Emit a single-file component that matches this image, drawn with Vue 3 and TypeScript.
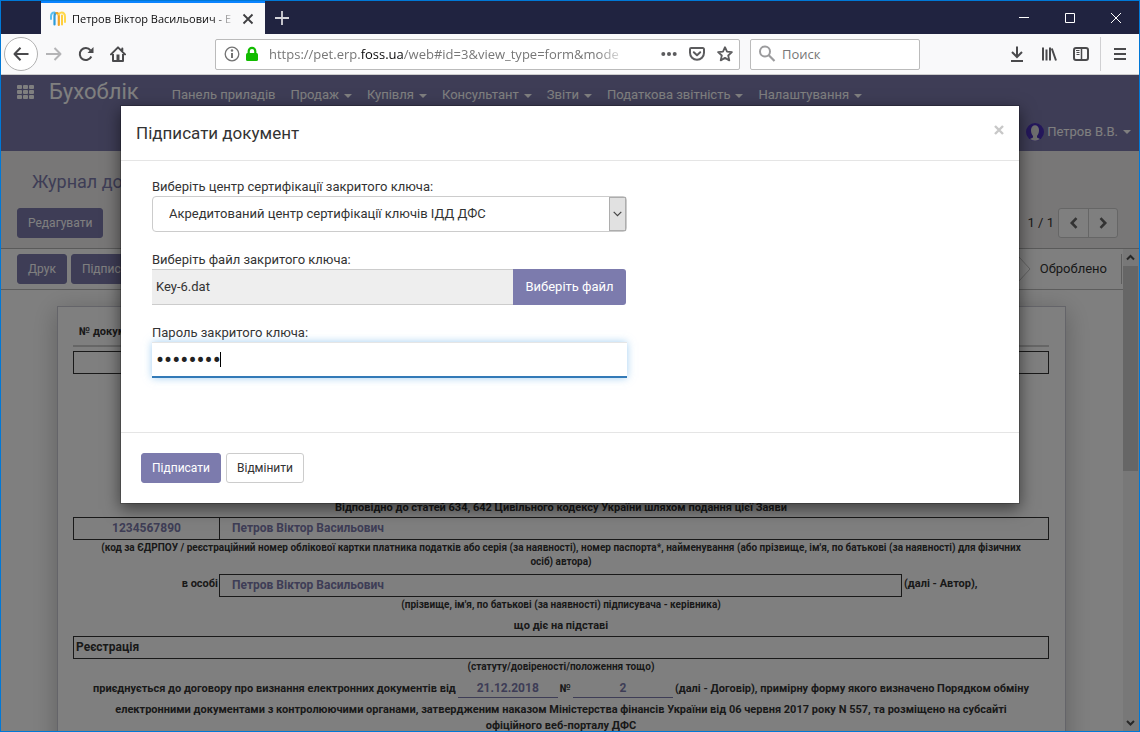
<script setup lang="ts">
import { ref } from 'vue'

interface MenuItem {
  label: string
  dropdown: boolean
}

const menu: MenuItem[] = [
  { label: 'Панель приладів', dropdown: false },
  { label: 'Продаж', dropdown: true },
  { label: 'Купівля', dropdown: true },
  { label: 'Консультант', dropdown: true },
  { label: 'Звіти', dropdown: true },
  { label: 'Податкова звітність', dropdown: true },
  { label: 'Налаштування', dropdown: true },
]

const authorities: string[] = ['Акредитований центр сертифікації ключів ІДД ДФС']
const authority = ref<string>(authorities[0])
const fileName = ref<string>('Key-6.dat')
const password = ref<string>('password')
const search = ref<string>('')
</script>

<template>
  <div class="window">
    <div class="tabs">
      <div class="tab">
        <svg class="favicon" width="16" height="16" viewBox="0 0 16 16" fill="none" stroke-linecap="round">
          <path d="M1 8V5.500C1 3 2.500 1.500 4.500 1.500" stroke="#5bc0f0" stroke-width="2" />
          <path d="M4.500 13.500V5C4.500 3 5.500 2 7 2" stroke="#2f9bd8" stroke-width="2.200" />
          <path d="M6.500 2C8.500 2 8.800 3.500 8.800 5v9" stroke="#f5a623" stroke-width="2.200" />
          <path d="M9 3.500c.5-1.300 1.300-2 2.500-2C14 1.500 15 3.500 15 6v5" stroke="#ffd84a" stroke-width="2" />
          <path d="M12 4.500v9" stroke="#ffc928" stroke-width="1.800" />
        </svg>
        <span class="tab-title">Петров Віктор Васильович - E</span>
        <button class="bare" aria-label="Закрити вкладку">
          <svg width="12" height="12" viewBox="0 0 12 12"><path d="M1.500 1.500l9 9M10.500 1.500l-9 9" stroke="#3f3f42" stroke-width="1.800" fill="none" /></svg>
        </button>
      </div>
      <button class="bare plus" aria-label="Нова вкладка">
        <svg width="14" height="14" viewBox="0 0 14 14"><path d="M7 0v14M0 7h14" stroke="#d4d4da" stroke-width="1.800" /></svg>
      </button>
      <div class="controls">
        <button class="bare" aria-label="Згорнути"><svg width="10" height="10"><path d="M0 4.500h10" stroke="#fff" /></svg></button>
        <button class="bare" aria-label="Розгорнути"><svg width="10" height="10"><path d="M.5.5h9v9h-9z" stroke="#fff" fill="none" /></svg></button>
        <button class="bare" aria-label="Закрити"><svg width="10" height="10"><path d="M0 0l10 10M10 0L0 10" stroke="#fff" /></svg></button>
      </div>
    </div>

    <div class="toolbar">
      <button class="bare back" aria-label="Назад">
        <svg width="16" height="16" viewBox="0 0 16 16"><path d="M15.500 8H1.500M7.500 1.800L1.500 8l6 6.200" stroke="#4a4a4c" stroke-width="2" fill="none" stroke-linejoin="round" /></svg>
      </button>
      <button class="bare" aria-label="Вперед">
        <svg width="16" height="16" viewBox="0 0 16 16"><path d="M0 8h14.500M8.500 2l6 6-6 6" stroke="#b4b4b6" stroke-width="2" fill="none" stroke-linejoin="round" /></svg>
      </button>
      <button class="bare" aria-label="Оновити">
        <svg width="16" height="16" viewBox="0 0 16 16"><path d="M12.500 4.300A6 6 0 1 0 13.300 10.500" stroke="#4a4a4c" stroke-width="2" fill="none" /><path d="M15.500 1v6H9.500z" fill="#4a4a4c" /></svg>
      </button>
      <button class="bare" aria-label="Додому">
        <svg width="16" height="16" viewBox="0 0 16 16"><path d="M1 8.400L8 1.400l7 7M12.300 2.500V5" stroke="#4a4a4c" stroke-width="2" fill="none" stroke-linejoin="round" stroke-linecap="round" /><path d="M3 8v7h10V8" stroke="#4a4a4c" stroke-width="2" fill="none" stroke-linejoin="round" /><path d="M6.500 8.500h3V14h-3z" fill="#4a4a4c" /></svg>
      </button>
      <span class="spring"></span>
      <div class="urlbar">
        <svg width="16" height="16" viewBox="0 0 16 16"><circle cx="8" cy="8" r="6.800" stroke="#737373" stroke-width="1.300" fill="none" /><path d="M8 7v5" stroke="#737373" stroke-width="2" /><circle cx="8" cy="4.500" r="1.200" fill="#737373" /></svg>
        <svg class="lock" width="14" height="16" viewBox="0 0 14 16"><rect x="1" y="7" width="12" height="8" rx="1.500" fill="#12bc00" /><path d="M3.700 8V5.200a3.300 3.300 0 0 1 6.600 0V8" stroke="#12bc00" stroke-width="2.200" fill="none" /></svg>
        <div class="url" role="textbox" aria-label="Адреса" contenteditable="true" spellcheck="false">https://pet.erp.<b>foss.ua</b>/web#id=3&amp;view_type=form&amp;mode</div>
        <button class="bare" aria-label="Дії зі сторінкою"><svg width="16" height="16" viewBox="0 0 16 16" fill="#5c5c5e"><circle cx="2.300" cy="8" r="2" /><circle cx="8" cy="8" r="2" /><circle cx="13.700" cy="8" r="2" /></svg></button>
        <button class="bare" aria-label="Pocket"><svg width="16" height="16" viewBox="0 0 16 16" fill="none" stroke="#5c5c5e" stroke-width="2" stroke-linejoin="round" stroke-linecap="round"><path d="M2.200 2h11.600a1.200 1.200 0 0 1 1.200 1.200v3.600a7 7 0 0 1-14 0V3.200A1.200 1.200 0 0 1 2.200 2z" /><path d="M4.800 6.300L8 9.300l3.200-3" /></svg></button>
        <button class="bare" aria-label="Додати закладку"><svg width="16" height="16" viewBox="0 0 16 16"><path d="M8 1.200l2 4.500 4.900.5-3.700 3.300 1.100 4.900L8 11.900l-4.300 2.500 1.100-4.900L1.100 6.200 6 5.700z" stroke="#5c5c5e" stroke-width="1.800" fill="none" stroke-linejoin="round" /></svg></button>
      </div>
      <label class="search">
        <svg width="18" height="18" viewBox="0 0 18 18"><circle cx="7" cy="6.500" r="5" stroke="#9b9b9d" stroke-width="2" fill="none" /><path d="M10.800 10.300L16.500 16" stroke="#9b9b9d" stroke-width="2.200" /></svg>
        <input v-model="search" type="text" placeholder="Поиск" aria-label="Поиск" />
      </label>
      <span class="spring"></span>
      <div class="tools">
        <button class="bare" aria-label="Завантаження"><svg width="16" height="16" viewBox="0 0 16 16"><path d="M8 .5v10M3 6l5 5 5-5M2 15h12" stroke="#4a4a4c" stroke-width="2" fill="none" /></svg></button>
        <button class="bare" aria-label="Бібліотека"><svg width="16" height="16" viewBox="0 0 16 16"><path d="M2 1.500v13M5.500 3.500v11M9 1.500v13M10.800 2.500l4.200 12" stroke="#4a4a4c" stroke-width="2" fill="none" /></svg></button>
        <button class="bare" aria-label="Бічна панель"><svg width="16" height="16" viewBox="0 0 16 16"><rect x="1" y="2" width="14" height="12" rx="2" stroke="#4a4a4c" stroke-width="2" fill="none" /><path d="M8.500 2v12" stroke="#4a4a4c" stroke-width="1.500" /><path d="M3 4.500h3.500M3.500 6.500h3M3.500 8.500h3" stroke="#4a4a4c" /></svg></button>
      </div>
      <button class="bare burger" aria-label="Меню"><svg width="12" height="14" viewBox="0 0 12 14"><path d="M0 2h12M0 7h12M0 12h12" stroke="#4a4a4c" stroke-width="2" /></svg></button>
    </div>

    <div class="page">
      <header class="topbar">
        <nav class="nav">
          <button class="bare apps" aria-label="Програми">
            <svg width="18" height="14" viewBox="0 0 18 14" fill="#fff"><rect v-for="n in 9" :key="n" :x="((n - 1) % 3) * 6" :y="Math.floor((n - 1) / 3) * 5" width="5" height="4" rx="1" /></svg>
          </button>
          <a class="brand" href="#">Бухоблік</a>
          <a v-for="item in menu" :key="item.label" class="menu-item" href="#">{{ item.label }}<i v-if="item.dropdown" class="caret"></i></a>
        </nav>
        <a class="user" href="#">
          <svg width="18" height="18" viewBox="0 0 18 18"><circle cx="9" cy="9" r="9" fill="#4a30b8" /><path d="M5 7c0-6.500 8-6.500 8 0 0 3-.8 4.500-2 6v1.500l3 1.500a9 9 0 0 1-10 0l3-1.500V13C5.800 11.500 5 10 5 7z" fill="#ddd" /></svg>
          <span>Петров В.В.</span><i class="caret"></i>
        </a>
      </header>

      <section class="panel">
        <h1><a href="#">Журнал документів</a></h1>
        <div class="panel-row">
          <button class="btn primary">Редагувати</button>
          <div class="pager">
            <span>1 / 1</span>
            <div class="pager-buttons">
              <button aria-label="Попередній"><svg width="10" height="12" viewBox="0 0 10 12"><path d="M7.500 1.200L2.800 6l4.700 4.800" stroke="#666" stroke-width="2.600" fill="none" /></svg></button>
              <button aria-label="Наступний"><svg width="10" height="12" viewBox="0 0 10 12"><path d="M2.500 1.200L7.200 6l-4.700 4.800" stroke="#666" stroke-width="2.600" fill="none" /></svg></button>
            </div>
          </div>
        </div>
      </section>

      <div class="content">
        <div class="form-view">
          <div class="statusbar">
            <button class="btn primary">Друк</button>
            <button class="btn primary">Підписати</button>
            <div class="status">
              <svg width="12" height="30" viewBox="0 0 12 30"><path d="M0 3l11 12L0 27" stroke="#c4c4c4" fill="none" /></svg>
              <span>Оброблено</span>
            </div>
          </div>
          <article class="sheet">
            <div class="doc-head">№ документа</div>
            <div class="box"></div>
            <p class="basis">Відповідно до статей 634, 642 Цивільного кодексу України шляхом подання цієї Заяви</p>
            <div class="box split">
              <span class="code">1234567890</span>
              <span class="name">Петров Віктор Васильович</span>
            </div>
            <p class="hint">(код за ЄДРПОУ / реєстраційний номер облікової картки платника податків або серія (за наявності), номер паспорта*, найменування (або прізвище, ім'я, по батькові (за наявності) для фізичних осіб) автора)</p>
            <div class="person">
              <span class="lead">в особі</span>
              <div class="box"><span class="name">Петров Віктор Васильович</span></div>
              <span class="tail">(далі - Автор),</span>
            </div>
            <p class="hint">(прізвище, ім'я, по батькові (за наявності) підписувача - керівника)</p>
            <p class="ground">що діє на підставі</p>
            <div class="box reason">Реєстрація</div>
            <p class="hint">(статуту/довіреності/положення тощо)</p>
            <p class="agreement">
              <span>приєднується до договору про визнання електронних документів від</span>
              <span class="blank">21.12.2018</span>
              <span>№</span>
              <span class="blank">2</span>
              <span>(далі - Договір), примірну форму якого визначено Порядком обміну</span>
            </p>
            <p class="closing">електронними документами з контролюючими органами, затвердженим наказом Міністерства фінансів України від 06 червня 2017 року N 557, та розміщено на субсайті офіційного веб-порталу ДФС</p>
          </article>
        </div>
        <div class="scrollbar" aria-hidden="true">
          <svg width="15" height="17" viewBox="0 0 15 17"><path d="M4 10.500L7.500 7l3.500 3.500" stroke="#505050" stroke-width="2" fill="none" /></svg>
          <div class="thumb"></div>
          <svg width="15" height="17" viewBox="0 0 15 17"><path d="M4 7l3.500 3.500L11 7" stroke="#505050" stroke-width="2" fill="none" /></svg>
        </div>
      </div>

      <div class="backdrop">
        <form class="modal" role="dialog" aria-labelledby="dialog-title" @submit.prevent>
          <div class="modal-header">
            <h2 id="dialog-title">Підписати документ</h2>
            <button type="button" class="bare" aria-label="Закрити вікно"><svg width="10" height="10" viewBox="0 0 10 10"><path d="M1 1l8 8M9 1L1 9" stroke="#c8c8c8" stroke-width="2.400" /></svg></button>
          </div>
          <div class="modal-body">
            <div class="field">
              <label for="authority">Виберіть центр сертифікації закритого ключа:</label>
              <div class="select">
                <select id="authority" v-model="authority">
                  <option v-for="a in authorities" :key="a">{{ a }}</option>
                </select>
                <span class="arrow"><svg width="9" height="6" viewBox="0 0 9 6"><path d="M.7.8l3.800 3.800L8.300.8" stroke="#444" stroke-width="1.200" fill="none" /></svg></span>
              </div>
            </div>
            <div class="field">
              <label for="keyfile">Виберіть файл закритого ключа:</label>
              <div class="file">
                <input id="keyfile" :value="fileName" type="text" readonly />
                <button type="button">Виберіть файл</button>
              </div>
            </div>
            <div class="field">
              <label for="password">Пароль закритого ключа:</label>
              <div class="secret">
                <input id="password" v-model="password" type="password" />
                <i class="cursor"></i>
              </div>
            </div>
          </div>
          <div class="modal-footer">
            <button type="submit" class="btn primary">Підписати</button>
            <button type="button" class="btn">Відмінити</button>
          </div>
        </form>
      </div>
    </div>
  </div>
</template>

<style>
body {
  margin: 0;
}
</style>

<style scoped>
* {
  box-sizing: border-box;
}
.window {
  display: flex;
  flex-direction: column;
  height: 100vh;
  overflow: hidden;
  border: 1px solid #0078d7;
  background: #fff;
  color: #333;
  font: 13px/20px Roboto, sans-serif;
}
button,
input,
select {
  font: inherit;
  color: inherit;
}
a {
  color: inherit;
  text-decoration: none;
}
svg {
  display: block;
  flex: none;
}
.bare {
  display: flex;
  align-items: center;
  justify-content: center;
  padding: 0;
  border: 0;
  background: none;
}

/* browser chrome */
.tabs {
  display: flex;
  align-items: stretch;
  height: 33px;
  padding-left: 40px;
  background: #202340;
}
.tab {
  display: flex;
  align-items: center;
  width: 224px;
  padding: 0 11px 0 9px;
  border-top: 2px solid #0a84ff;
  background: #f9f9fa;
  color: #0c0c0d;
  font: 11px/16px "Open Sans", "Noto Sans", sans-serif;
}
.tab-title {
  flex: 1;
  margin: 0 6px;
  overflow: hidden;
  white-space: nowrap;
  mask-image: linear-gradient(to left, transparent, #000 24px);
}
.plus {
  margin-left: 10px;
}
.controls {
  display: flex;
  margin-left: auto;
}
.controls .bare {
  width: 46px;
}
.toolbar {
  display: flex;
  align-items: center;
  height: 41px;
  padding: 0 13px 0 3px;
  border-bottom: 1px solid #ccc;
  background: #f9f9fa;
}
.toolbar > .bare {
  flex: none;
  width: 16px;
  height: 34px;
  margin-right: 16px;
}
.toolbar > .back {
  width: 34px;
  margin-right: 8px;
  border: 1px solid #b1b1b1;
  border-radius: 50%;
  background: #fff;
}
.spring {
  flex: 0 1 73px;
}
.spring ~ .spring {
  flex-basis: 89px;
}
.urlbar,
.search {
  display: flex;
  align-items: center;
  height: 31px;
  border: 1px solid #bbb;
  border-radius: 2px;
  background: #fff;
  font: 13px/20px "Open Sans", "Noto Sans", sans-serif;
}
.urlbar {
  flex: 1;
  gap: 12px;
  min-width: 0;
  padding: 0 6px 0 8px;
}
.lock {
  margin-left: -7px;
}
.url {
  flex: 1;
  overflow: hidden;
  margin-right: 22px;
  margin-left: -2px;
  outline: 0;
  color: #777;
  white-space: nowrap;
  mask-image: linear-gradient(to left, transparent, #000 30px);
}
.url b {
  color: #0c0c0d;
  font-weight: 400;
}
.search {
  width: 170px;
  margin-left: 10px;
  padding: 0 7px;
}
.search input {
  flex: 1;
  min-width: 0;
  padding: 0 0 0 6px;
  border: 0;
  outline: 0;
  background: none;
}
.search input::placeholder {
  color: #777;
}
.tools {
  display: flex;
  gap: 16px;
  padding-right: 11px;
}
.toolbar > .burger {
  width: 26px;
  margin: 0;
  padding-left: 13px;
  border-left: 1px solid #d0d0d2;
}

/* application */
.page {
  position: relative;
  display: flex;
  flex: 1;
  flex-direction: column;
  min-height: 0;
}
.topbar {
  display: flex;
  flex-direction: column;
  height: 76px;
  background: #7c7bad;
  color: #fff;
}
.nav {
  display: flex;
  align-items: baseline;
  height: 38px;
  padding-left: 16px;
  line-height: 38px;
}
.brand {
  margin: 0 18px 0 14px;
  font-size: 22px;
  line-height: 34px;
}
.menu-item {
  margin-left: 15px;
}
.caret {
  display: inline-block;
  margin-left: 5px;
  border: 4px solid transparent;
  border-top-color: currentColor;
  border-bottom: 0;
  vertical-align: middle;
}
.user {
  display: flex;
  align-items: center;
  align-self: flex-end;
  gap: 3px;
  height: 38px;
  padding-right: 8px;
}
.user .caret {
  margin-left: 2px;
}
.panel {
  padding: 20px 21px 10px 16px;
  border-bottom: 1px solid #b5b5b5;
  background: #f0eeee;
}
h1,
h2,
p {
  margin: 0;
  font-weight: inherit;
}
h1 {
  padding-left: 15px;
  color: #7c7bad;
  font-size: 18px;
  line-height: 22px;
}
.panel-row {
  display: flex;
  justify-content: space-between;
  margin-top: 15px;
}
.btn {
  height: 30px;
  padding: 0 10px;
  border: 1px solid #ccc;
  border-radius: 3px;
  background: #fff;
  color: #333;
  font-size: 12px;
  line-height: 18px;
}
.btn.primary {
  border-color: #7c7bad;
  background: #7c7bad;
  color: #fff;
}
.pager {
  display: flex;
  align-items: center;
  gap: 4px;
}
.pager-buttons {
  display: flex;
  border: 1px solid #ccc;
  border-radius: 3px;
  background: #fff;
}
.pager-buttons button {
  display: flex;
  align-items: center;
  justify-content: center;
  width: 29px;
  height: 28px;
  padding: 0;
  border: 0;
  background: none;
}
.pager-buttons button + button {
  border-left: 1px solid #ccc;
}
.content {
  display: flex;
  flex: 1;
  min-height: 0;
}
.form-view {
  flex: 1;
  min-width: 0;
  overflow: hidden;
}
.statusbar {
  display: flex;
  align-items: center;
  gap: 4px;
  height: 41px;
  padding: 0 1px 0 16px;
  border-bottom: 1px solid #bbb;
}
.status {
  display: flex;
  align-items: center;
  gap: 9px;
  height: 30px;
  margin-left: auto;
  padding-right: 14px;
  border-right: 1px solid #bbb;
}
.scrollbar {
  display: flex;
  flex-direction: column;
  width: 16px;
  background: #f0f0f0;
}
.thumb {
  width: 15px;
  height: 205px;
  margin-bottom: auto;
  background: #cdcdcd;
}
.sheet {
  max-width: 1009px;
  min-height: 600px;
  margin: 16px 56px 0;
  padding: 15px 16px 15px 15px;
  border: 1px solid #c8c8d3;
  box-shadow: 0 5px 24px rgba(0, 0, 0, 0.25);
  color: #333;
  font-size: 11px;
  font-weight: 700;
  line-height: 17px;
  text-align: center;
}
.doc-head {
  margin-bottom: 4px;
  padding: 1px 6px 5px;
  border-bottom: 2px solid #ccc;
  text-align: left;
}
.box {
  height: 23px;
  border: 1px solid #333;
  font-size: 12px;
  line-height: 21px;
  text-align: left;
}
.basis {
  padding: 125px 0 1px;
}
.split {
  display: flex;
}
.code {
  width: 146px;
  border-right: 1px solid #333;
  color: #7c7bad;
  text-align: center;
}
.name {
  padding-left: 12px;
  color: #7c7bad;
}
.hint {
  padding: 1px 20px 0;
  font-size: 10px;
  line-height: 14px;
}
.split + .hint {
  padding-bottom: 5px;
}
.person {
  display: flex;
}
.person .lead {
  width: 146px;
  padding-right: 1px;
  line-height: 20px;
  text-align: right;
}
.person .box {
  flex: 1;
}
.person .tail {
  width: 147px;
  padding-left: 2px;
  line-height: 20px;
  text-align: left;
}
.ground {
  padding: 5px 0 2px;
}
.reason {
  padding-left: 2px;
}
.agreement {
  display: flex;
  gap: 2px;
  justify-content: center;
  padding-top: 6px;
  white-space: nowrap;
}
.blank {
  flex: 0 1 100px;
  border-bottom: 1px solid #7c7bad;
  color: #7c7bad;
  font-size: 12px;
}
.closing {
  padding: 4px 25px 0;
  line-height: 16px;
}

/* dialog */
.backdrop {
  position: absolute;
  inset: 0;
  padding: 30px 0;
  background: rgba(0, 0, 0, 0.5);
}
.modal {
  width: 900px;
  max-width: 100%;
  margin: 0 auto;
  border: 1px solid rgba(0, 0, 0, 0.2);
  background: #fff;
  background-clip: padding-box;
  box-shadow: 0 5px 15px rgba(0, 0, 0, 0.5);
}
.modal-header {
  display: flex;
  justify-content: space-between;
  padding: 15px;
  border-bottom: 1px solid #e5e5e5;
}
h2 {
  font-size: 17px;
  line-height: 24px;
}
.modal-header .bare {
  height: 18px;
}
.modal-body {
  display: flex;
  flex-direction: column;
  gap: 18px;
  padding: 16px 31px 54px;
}
.field {
  display: flex;
  flex-direction: column;
  max-width: 475px;
}
.field label {
  line-height: 19px;
}
.select,
.secret {
  position: relative;
}
.select select {
  display: block;
  width: 100%;
  height: 36px;
  padding: 0 24px 0 16px;
  border: 1px solid #ccc;
  border-radius: 4px;
  background: #fff;
  appearance: none;
}
.arrow {
  position: absolute;
  top: 1px;
  right: 1px;
  bottom: 1px;
  display: flex;
  align-items: center;
  justify-content: center;
  width: 17px;
  border: 1px solid #adadad;
  background: #e1e1e1;
  pointer-events: none;
}
.file {
  display: flex;
  height: 36px;
  margin-right: 1px;
}
.file input {
  flex: 1;
  min-width: 0;
  padding: 0 4px;
  border: 1px solid #ccc;
  border-width: 1px 0;
  background: #eee;
  outline: 0;
}
.file button {
  width: 113px;
  padding: 0;
  border: 0;
  border-radius: 0 3px 3px 0;
  background: #7c7bad;
  color: #fff;
}
.secret input {
  display: block;
  width: 100%;
  height: 36px;
  padding: 0 4px;
  border: 0;
  border-top: 1px solid #e5e5e5;
  border-bottom: 2px solid #337ab7;
  outline: 0;
  background: #fff;
  box-shadow: 0 0 8px rgba(102, 175, 233, 0.6);
  color: #222;
  font-size: 24px;
}
.cursor {
  position: absolute;
  top: 10px;
  left: 68px;
  width: 1px;
  height: 15px;
  background: #000;
}
.modal-footer {
  display: flex;
  gap: 5px;
  padding: 20px;
  border-top: 1px solid #e5e5e5;
}
</style>
